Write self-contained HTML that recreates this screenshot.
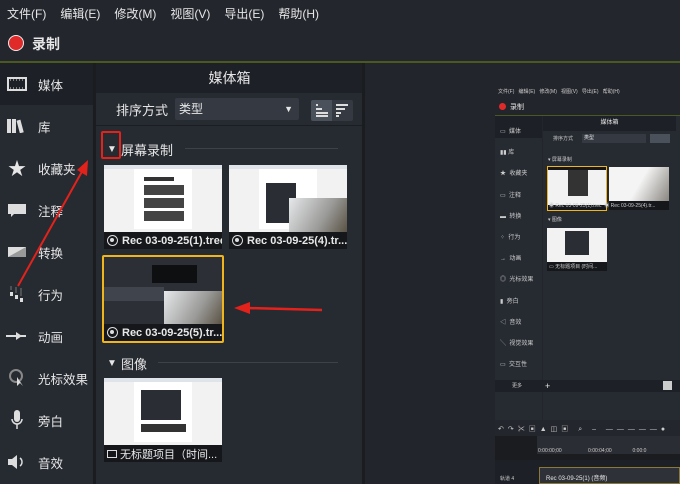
<!DOCTYPE html>
<html><head><meta charset="utf-8"><style>
*{margin:0;padding:0;box-sizing:border-box}
body{width:680px;height:484px;overflow:hidden;background:#22252b;font-family:"Liberation Sans","Noto Sans CJK SC",sans-serif;color:#e6e6e6;position:relative}
.a{position:absolute}
.menu span{margin-right:14px;font-size:12px}
.side div.it{position:absolute;left:0;width:93px;height:42px;font-size:12.5px;display:flex;align-items:center;white-space:nowrap}
.side .ic{width:26px;display:flex;justify-content:center;margin-left:4px;margin-right:8px;flex:none}
.thumb{position:absolute;background:#15171b;width:118px}
.thumb .img{height:67px;background:#f2f2f2;position:relative;overflow:hidden}
.thumb .lb{height:17px;font-size:11px;font-weight:bold;color:#e8e8e8;display:flex;align-items:center;padding-left:3px;white-space:nowrap;overflow:hidden}
.rc{display:inline-block;width:11px;height:11px;border-radius:50%;border:1.5px solid #ddd;margin-right:4px;position:relative;flex:none}
.rc:after{content:"";position:absolute;left:2px;top:2px;width:4px;height:4px;border-radius:50%;background:#ddd}
.m{font-size:5px;color:#ccc}
</style></head><body>
<div class="a" style="left:0;top:0;width:680px;height:61px;background:#23262d"></div>
<div class="a menu" style="left:7px;top:5px;">
<span>文件(F)</span><span>编辑(E)</span><span>修改(M)</span><span>视图(V)</span><span>导出(E)</span><span>帮助(H)</span></div>
<div class="a" style="left:8px;top:35px;width:16px;height:16px;border-radius:50%;background:#e02a2a;border:1.5px solid #eee"></div>
<div class="a" style="left:32px;top:34px;font-size:14px;font-weight:bold">录制</div>
<div class="a" style="left:0;top:61px;width:680px;height:2px;background:#4a5a1e"></div>
<div class="a side" style="left:0;top:63px;width:93px;height:421px;background:#262a31">
<div class="it" style="top:0;background:#1d2026"><span class="ic"><svg width="20" height="16"><rect x="1" y="2" width="18" height="12" fill="none" stroke="#ddd" stroke-width="2"/><path d="M3 4h1M6 4h1M9 4h1M12 4h1M15 4h1M3 12h1M6 12h1M9 12h1M12 12h1M15 12h1" stroke="#ddd"/></svg></span>媒体</div>
<div class="it" style="top:42px"><span class="ic"><svg width="20" height="14"><rect x="0" y="0" width="4" height="14" fill="#ddd"/><rect x="5" y="0" width="4" height="14" fill="#ddd"/><rect x="11" y="1" width="4" height="13" fill="#ddd" transform="rotate(-15 13 7)"/></svg></span>库</div>
<div class="it" style="top:84px"><span class="ic" style="font-size:18px">★</span>收藏夹</div>
<div class="it" style="top:126px"><span class="ic"><svg width="20" height="16"><rect x="1" y="2" width="18" height="10" fill="#ddd"/><path d="M4 12l0 3 3-3z" fill="#ddd"/></svg></span>注释</div>
<div class="it" style="top:168px"><span class="ic"><svg width="20" height="12"><rect x="1" y="1" width="18" height="10" fill="#ddd"/><path d="M1 11L19 1V11z" fill="#999"/></svg></span>转换</div>
<div class="it" style="top:210px"><span class="ic"><svg width="16" height="18"><rect x="1" y="7" width="3" height="4" fill="#ddd"/><rect x="6" y="10" width="3" height="4" fill="#ddd"/><rect x="11" y="13" width="3" height="4" fill="#ddd"/><path d="M2 1v4M7 2v6M12 3v8" stroke="#777"/></svg></span>行为</div>
<div class="it" style="top:252px"><span class="ic"><svg width="22" height="10"><path d="M0 5h20" stroke="#ddd" stroke-width="2"/><path d="M10 1l6 4-6 4z" fill="#ddd"/></svg></span>动画</div>
<div class="it" style="top:294px"><span class="ic"><svg width="16" height="18"><circle cx="7" cy="7" r="6" fill="none" stroke="#888" stroke-width="2"/><path d="M8 8v9l3-3 3 3z" fill="#ddd"/></svg></span>光标效果</div>
<div class="it" style="top:336px"><span class="ic"><svg width="14" height="20"><rect x="4" y="0" width="6" height="12" rx="3" fill="#ddd"/><path d="M2 9a5 5 0 0 0 10 0M7 14v5" stroke="#ddd" fill="none" stroke-width="1.5"/></svg></span>旁白</div>
<div class="it" style="top:378px"><span class="ic"><svg width="20" height="18"><path d="M1 6h4l5-4v14l-5-4H1z" fill="#ddd"/><path d="M13 5a5 5 0 0 1 0 8" stroke="#ddd" fill="none" stroke-width="1.5"/></svg></span>音效</div>
</div>
<div class="a" style="left:93px;top:63px;width:3px;height:421px;background:#1a1c20"></div>
<div class="a" style="left:96px;top:63px;width:267px;height:421px;background:#262a31"></div>
<div class="a" style="left:96px;top:63px;width:267px;height:30px;background:#1d2026;font-size:14px;text-align:center;line-height:30px">媒体箱</div>
<div class="a" style="left:96px;top:125px;width:267px;height:1px;background:#1b1d22"></div>
<div class="a" style="left:116px;top:100px;font-size:13px">排序方式</div>
<div class="a" style="left:175px;top:98px;width:124px;height:22px;background:#343942;border-radius:2px;font-size:12px;line-height:22px;padding-left:4px">类型<span style="position:absolute;right:6px;top:0;font-size:9px">▼</span></div>
<div class="a" style="left:311px;top:100px;width:21px;height:21px;background:#4a515b;border-radius:2px 0 0 2px"></div>
<div class="a" style="left:332px;top:100px;width:21px;height:21px;background:#343942;border-radius:0 2px 2px 0"></div>
<svg class="a" style="left:313px;top:103px" width="40" height="15"><path d="M3 2h2M3 6h6M3 10h12M3 13h12" stroke="#ddd" stroke-width="2"/><path d="M23 2h12M23 6h9M23 10h5M23 13h3" stroke="#ddd" stroke-width="2"/></svg>
<div class="a" style="left:107px;top:144px;font-size:10px">▼</div>
<div class="a" style="left:121px;top:140px;font-size:13px">屏幕录制</div>
<div class="a" style="left:185px;top:148px;width:153px;height:1px;background:#3c414a"></div>
<div class="a" style="left:101px;top:131px;width:20px;height:28px;border:2px solid #e3221c;border-radius:2px"></div>

<div class="thumb" style="left:104px;top:165px"><div class="img">
<div class="a" style="left:30px;top:4px;width:58px;height:60px;background:#fff"></div>
<div class="a" style="left:40px;top:12px;width:30px;height:4px;background:#333"></div>
<div class="a" style="left:40px;top:20px;width:40px;height:10px;background:#444"></div>
<div class="a" style="left:40px;top:33px;width:40px;height:10px;background:#444"></div>
<div class="a" style="left:40px;top:46px;width:40px;height:10px;background:#444"></div>
<div class="a" style="left:0;top:0;width:118px;height:4px;background:#dfe3ea"></div></div>
<div class="lb"><span class="rc"></span>Rec 03-09-25(1).trec</div></div>

<div class="thumb" style="left:229px;top:165px"><div class="img">
<div class="a" style="left:30px;top:4px;width:58px;height:60px;background:#fff"></div>
<div class="a" style="left:37px;top:18px;width:30px;height:40px;background:#2a2d33"></div>
<div class="a" style="left:60px;top:33px;width:58px;height:34px;background:linear-gradient(120deg,#e6e8ea,#9a9a98 60%,#5a5244)"></div>
<div class="a" style="left:0;top:0;width:118px;height:4px;background:#dfe3ea"></div></div>
<div class="lb"><span class="rc"></span>Rec 03-09-25(4).tr...</div></div>

<div class="thumb" style="left:102px;top:255px;width:122px;border:2px solid #f0b41c;border-radius:2px"><div class="img" style="height:67px;background:#2c3036">
<div class="a" style="left:48px;top:8px;width:45px;height:18px;background:#0e0f11"></div>
<div class="a" style="left:0;top:30px;width:60px;height:14px;background:#40454d"></div>
<div class="a" style="left:60px;top:34px;width:58px;height:33px;background:linear-gradient(120deg,#e6e8ea,#9a9a98 60%,#5a5244)"></div></div>
<div class="lb"><span class="rc"></span>Rec 03-09-25(5).tr...</div></div>

<div class="a" style="left:107px;top:358px;font-size:10px">▼</div>
<div class="a" style="left:121px;top:354px;font-size:13px">图像</div>
<div class="a" style="left:158px;top:362px;width:180px;height:1px;background:#3c414a"></div>
<div class="thumb" style="left:104px;top:378px"><div class="img">
<div class="a" style="left:30px;top:4px;width:58px;height:60px;background:#fff"></div>
<div class="a" style="left:37px;top:12px;width:40px;height:30px;background:#2a2d33"></div>
<div class="a" style="left:37px;top:46px;width:45px;height:8px;background:#333"></div>
<div class="a" style="left:0;top:0;width:118px;height:4px;background:#dfe3ea"></div></div>
<div class="lb" style="font-weight:normal"><span style="display:inline-block;width:10px;height:8px;border:1px solid #ddd;margin-right:3px"></span>无标题项目（时间...</div></div>

<div class="a" style="left:362px;top:63px;width:3px;height:421px;background:#1a1c20"></div>

<div class="a" style="left:495px;top:85px;width:185px;height:399px;background:#22252b"></div>
<div class="a m" style="left:498px;top:88px;white-space:nowrap">文件(F)&nbsp;&nbsp;&nbsp;编辑(E)&nbsp;&nbsp;&nbsp;修改(M)&nbsp;&nbsp;&nbsp;视图(V)&nbsp;&nbsp;&nbsp;导出(E)&nbsp;&nbsp;&nbsp;帮助(H)</div>
<div class="a" style="left:499px;top:103px;width:7px;height:7px;border-radius:50%;background:#e02a2a"></div>
<div class="a" style="left:510px;top:102px;font-size:7px">录制</div>
<div class="a" style="left:495px;top:115px;width:185px;height:1px;background:#4a5a1e"></div>
<div class="a" style="left:495px;top:116px;width:47px;height:304px;background:#262a31"></div>
<div class="a" style="left:495px;top:116px;width:47px;height:22px;background:#1d2026"></div>
<div class="a m" style="left:500px;top:122px;line-height:21.2px;font-size:6px">▭&nbsp;&nbsp;媒体<br>▮▮&nbsp;库<br>★&nbsp;&nbsp;收藏夹<br>▭&nbsp;&nbsp;注释<br>▬&nbsp;&nbsp;转换<br>⁘&nbsp;&nbsp;行为<br>→&nbsp;&nbsp;动画<br>◎&nbsp;&nbsp;光标效果<br>▮&nbsp;&nbsp;旁白<br>◁&nbsp;&nbsp;音效<br>╲&nbsp;&nbsp;视觉效果<br>▭&nbsp;&nbsp;交互性</div>
<div class="a" style="left:543px;top:116px;width:137px;height:304px;background:#262a31"></div>
<div class="a" style="left:543px;top:116px;width:133px;height:15px;background:#1d2026;font-size:6px;text-align:center;line-height:15px">媒体箱</div>
<div class="a m" style="left:553px;top:135px">排序方式</div>
<div class="a" style="left:582px;top:134px;width:64px;height:9px;background:#343942;font-size:5px;padding-left:2px">类型</div>
<div class="a" style="left:650px;top:134px;width:20px;height:9px;background:#4a515b"></div>
<div class="a m" style="left:548px;top:156px">▾ 屏幕录制</div>
<div class="a" style="left:547px;top:166px;width:60px;height:45px;background:#15171b;border:1px solid #f0b41c"><div style="height:35px;background:#f2f2f2"><div style="margin:3px 20px;width:20px;height:26px;background:#333"></div></div></div>
<div class="a" style="left:609px;top:167px;width:60px;height:43px;background:#15171b"><div style="height:34px;background:linear-gradient(120deg,#f4f4f4 50%,#8a8680)"></div></div>
<div class="a m" style="left:549px;top:202px;white-space:nowrap">◉ Rec 03-09-25(1).trec&nbsp;&nbsp;◉ Rec 03-09-25(4).tr...</div>
<div class="a m" style="left:548px;top:216px">▾ 图像</div>
<div class="a" style="left:547px;top:228px;width:60px;height:43px;background:#15171b"><div style="height:34px;background:#f2f2f2"><div style="margin:3px 18px;width:24px;height:24px;background:#2a2d33;display:inline-block"></div></div></div>
<div class="a m" style="left:549px;top:263px">▭ 无标题项目 (时间...</div>
<div class="a" style="left:495px;top:380px;width:185px;height:12px;background:#1d2026"></div>
<div class="a m" style="left:512px;top:382px">更多</div>
<div class="a" style="left:545px;top:380px;font-size:9px;line-height:12px">+</div>
<div class="a" style="left:663px;top:381px;width:9px;height:9px;background:#ccc"></div>
<div class="a" style="left:495px;top:420px;width:185px;height:16px;background:#23262d"></div>
<div class="a m" style="left:498px;top:424px;font-size:7px;letter-spacing:4px;white-space:nowrap">↶↷✂▣▲◫▣ ⌕ – —————●</div>
<div class="a" style="left:495px;top:436px;width:185px;height:24px;background:#1a1c20"></div>
<div class="a" style="left:537px;top:436px;width:143px;height:18px;background:#2a2d33"></div>
<div class="a m" style="left:538px;top:448px;white-space:nowrap">0:00:00;00&nbsp;&nbsp;&nbsp;&nbsp;&nbsp;&nbsp;&nbsp;&nbsp;&nbsp;&nbsp;&nbsp;&nbsp;&nbsp;&nbsp;&nbsp;&nbsp;&nbsp;&nbsp;&nbsp;0:00:04;00&nbsp;&nbsp;&nbsp;&nbsp;&nbsp;&nbsp;&nbsp;&nbsp;&nbsp;&nbsp;&nbsp;&nbsp;&nbsp;&nbsp;&nbsp;0:00:0</div>
<div class="a" style="left:495px;top:460px;width:185px;height:24px;background:#1d2026"></div>
<div class="a" style="left:539px;top:467px;width:141px;height:17px;background:#2e3238;border:1px solid #8a7a3a"></div>
<div class="a" style="left:546px;top:473px;font-size:6px;white-space:nowrap">Rec 03-09-25(1) (音频)</div>
<div class="a m" style="left:500px;top:475px">轨道 4</div>

<svg class="a" style="left:0;top:0" width="680" height="484">
<path d="M18 286L84 168" stroke="#e3221c" stroke-width="2"/>
<path d="M88 160l-1 16-10-6z" fill="#e3221c"/>
<path d="M322 310L248 308" stroke="#e3221c" stroke-width="2.5"/>
<path d="M234 308l16-6v12z" fill="#e3221c"/>
</svg>
</body></html>
